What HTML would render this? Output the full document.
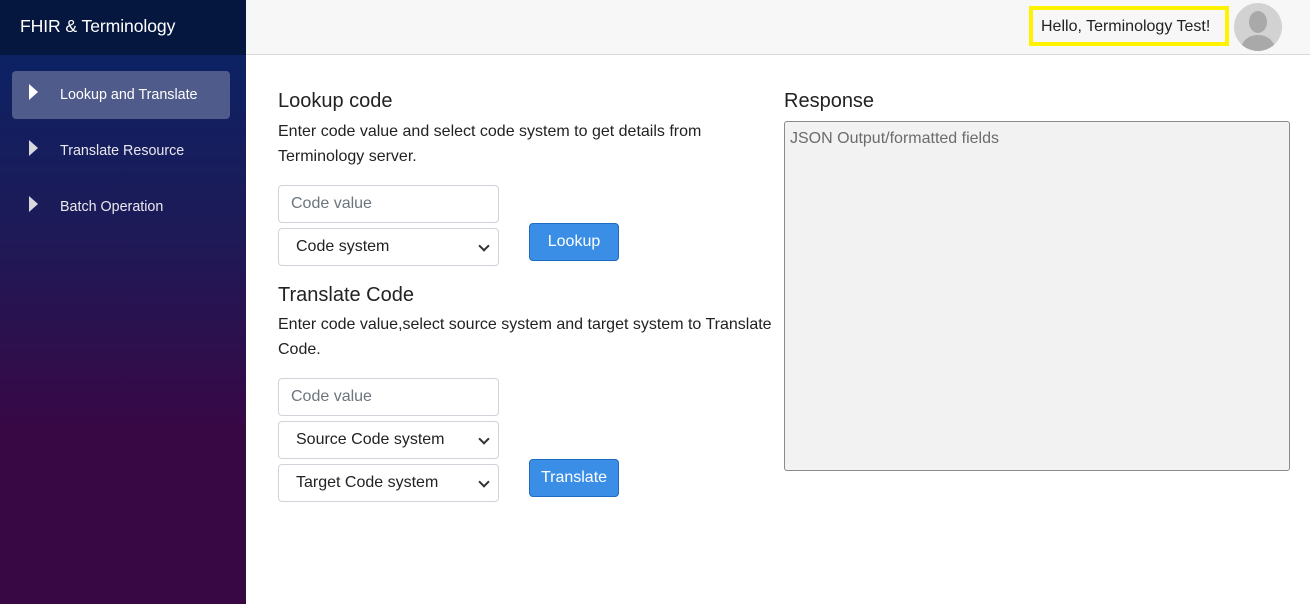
<!DOCTYPE html>
<html><head><style>
*{box-sizing:border-box;margin:0;padding:0}
body{width:1310px;height:604px;overflow:hidden;font-family:"Liberation Sans",sans-serif;background:#fff;position:relative;color:#212529}
.abs{position:absolute}
#side{left:0;top:0;width:246px;height:604px;background:linear-gradient(180deg,#0c2263 55px,#1e1a58 230px,#380845 430px,#380845 604px)}
#brand{left:0;top:0;width:246px;height:55px;background:#05173f;color:#fff;font-size:17.6px;padding:16px 0 0 20px;letter-spacing:-0.1px}
.nav{left:12px;width:218px;height:48px;color:#e8e8ee;font-size:14.3px;border-radius:4px}
.nav span{position:absolute;left:48px;top:16px}
.nav i{position:absolute;left:17px;top:13px;width:0;height:0;border-top:8px solid transparent;border-bottom:8px solid transparent;border-left:9px solid #d8d8de}
.act{background:#4f5b8a;color:#fff}
.act i{border-left-color:#fff}
#top{left:246px;top:0;width:1064px;height:55px;background:#f7f7f7;border-bottom:1px solid #d8d8d8}
#hello{left:1029px;top:6px;width:200px;height:40px;border:4px solid #fff200;font-size:16px;padding:8px 0 0 8px;color:#222}
#av{left:1234px;top:3px;width:48px;height:48px;border-radius:50%;background:#d2d2d2;overflow:hidden}
h2{position:absolute;font-size:20px;font-weight:normal;color:#222}
p{position:absolute;font-size:16px;line-height:24.5px;color:#222}
.in{position:absolute;left:278px;width:221px;height:38px;border:1px solid #ced4da;border-radius:4px;font-size:16px;padding:9px 12px;color:#6c757d;background:#fff}
.sel{color:#222;padding-left:17px}
.sel::after{content:"";position:absolute;right:10px;top:13px;width:6px;height:6px;border-right:2px solid #333;border-bottom:2px solid #333;transform:rotate(45deg)}
.btn{position:absolute;left:529px;width:90px;height:38px;background:#3a8ee6;border:1px solid #1f6bbf;border-radius:4px;color:#fff;font-size:16px;text-align:center;padding-top:9px}
#resp{left:784px;top:121px;width:506px;height:350px;background:#f2f2f2;border:1px solid #8a8a8a;border-radius:3px;color:#6c6c6c;font-size:16px;padding:8px 5px}
</style></head><body>
<div id="side" class="abs"></div>
<div id="brand" class="abs">FHIR &amp; Terminology</div>
<div class="abs nav act" style="top:71px"><i></i><span>Lookup and Translate</span></div>
<div class="abs nav" style="top:127px"><i></i><span>Translate Resource</span></div>
<div class="abs nav" style="top:183px"><i></i><span>Batch Operation</span></div>
<div id="top" class="abs"></div>
<div id="hello" class="abs">Hello, Terminology Test!</div>
<div id="av" class="abs"><svg width="48" height="48" viewBox="0 0 48 48"><ellipse cx="24" cy="19" rx="9" ry="11" fill="#a9a9a9"/><path d="M6 48 C8 36 16 32 24 32 C32 32 40 36 42 48Z" fill="#a9a9a9"/></svg></div>

<h2 style="left:278px;top:90px">Lookup code</h2>
<p style="left:278px;top:120px">Enter code value and select code system to get details from<br>Terminology server.</p>
<div class="in" style="top:185px">Code value</div>
<div class="in sel" style="top:228px">Code system</div>
<div class="btn" style="top:223px">Lookup</div>

<h2 style="left:278px;top:284px">Translate Code</h2>
<p style="left:278px;top:313px">Enter code value,select source system and target system to Translate<br>Code.</p>
<div class="in" style="top:378px">Code value</div>
<div class="in sel" style="top:421px">Source Code system</div>
<div class="in sel" style="top:464px">Target Code system</div>
<div class="btn" style="top:459px">Translate</div>

<h2 style="left:784px;top:90px">Response</h2>
<div id="resp" class="abs">JSON Output/formatted fields</div>
</body></html>
